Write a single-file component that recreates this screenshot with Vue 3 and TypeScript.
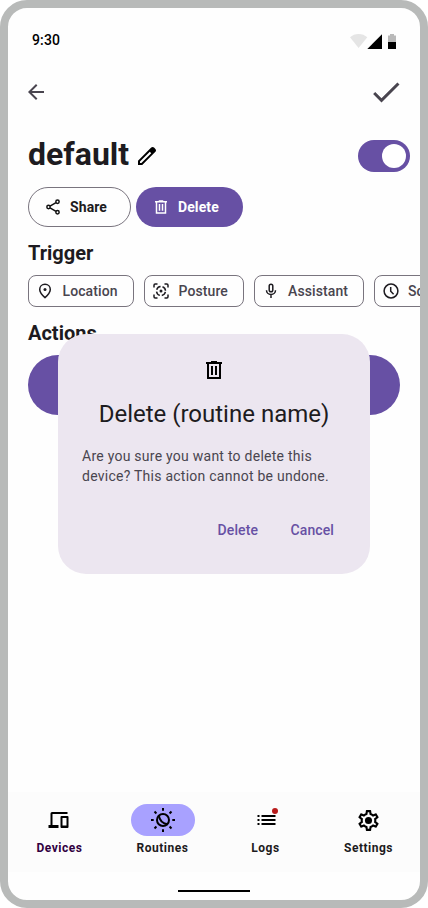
<script setup lang="ts">
import { ref } from 'vue'

interface Chip {
  id: string
  label: string
}
interface NavItem {
  id: string
  label: string
}

const enabled = ref(true)
const active = ref('routines')

const chips: Chip[] = [
  { id: 'location', label: 'Location' },
  { id: 'posture', label: 'Posture' },
  { id: 'assistant', label: 'Assistant' },
  { id: 'schedule', label: 'Schedule' },
]
const navItems: NavItem[] = [
  { id: 'devices', label: 'Devices' },
  { id: 'routines', label: 'Routines' },
  { id: 'logs', label: 'Logs' },
  { id: 'settings', label: 'Settings' },
]
const rayAngles = [0, 45, 90, 135, 180, 225, 270, 315]
const trashPath =
  'M15 4V3H9v1H4v2h1v14.500q0 .500.500.500h13q.500 0 .500-.500V6h1V4zm2 15H7V6h10zM9 8h2v9H9zm4 0h2v9h-2z'
</script>

<template>
  <div class="phone">
    <header class="status">
      <span class="time">9:30</span>
      <svg class="status-icons" width="48" height="16" viewBox="0 0 48 16">
        <path d="M0 3.300C2.300 1.200 5.200 0 8.600 0s6.400 1.200 8.700 3.300L8.600 14z" fill="#e5e5e5" />
        <path d="M17.300 15H32V.300z" fill="#000" />
        <path d="M38 8V1.500h2V0h4v1.500h2V8z" fill="#b9b9b9" />
        <path d="M38 8h8v7h-8z" fill="#000" />
      </svg>
    </header>

    <div class="toolbar">
      <button class="icon-btn" aria-label="Back">
        <svg width="24" height="24" viewBox="0 0 24 24">
          <path d="M20 11H7.830l5.590-5.590L12 4l-8 8 8 8 1.410-1.410L7.830 13H20z" fill="#49454f" />
        </svg>
      </button>
      <button class="icon-btn" aria-label="Save">
        <svg width="36" height="36" viewBox="0 0 24 24">
          <path d="M9 16.170 4.830 12l-1.420 1.410L9 19 21 7l-1.410-1.410z" fill="#49454f" />
        </svg>
      </button>
    </div>

    <main class="content">
      <div class="title-row">
        <h1>default</h1>
        <svg class="pencil" width="24" height="24" viewBox="0 0 24 24">
          <path fill-rule="evenodd" d="M3 21v-4.250L16.200 3.600q.6-.6 1.400-.6t1.425.6L20.400 5q.6.6.6 1.400t-.6 1.400L7.250 21zM5 19h1.400L16.250 9.200 14.800 7.750 5 17.600z" />
        </svg>
        <button class="switch" :class="{ on: enabled }" aria-label="Enabled" @click="enabled = !enabled">
          <span class="knob"></span>
        </button>
      </div>

      <div class="buttons">
        <button class="btn outlined">
          <svg width="18" height="18" viewBox="0 0 24 24" fill="none" stroke="#111" stroke-width="2">
            <circle cx="18" cy="5" r="2.200" />
            <circle cx="6" cy="12" r="2.200" />
            <circle cx="18" cy="19" r="2.200" />
            <path d="M8 10.900 16 6.200M8 13.100l8 4.700" />
          </svg>
          Share
        </button>
        <button class="btn filled">
          <svg width="18" height="18" viewBox="0 0 24 24"><path :d="trashPath" fill="#fff" /></svg>
          Delete
        </button>
      </div>

      <h2>Trigger</h2>
      <div class="chips">
        <button v-for="chip in chips" :key="chip.id" class="chip" :class="chip.id">
          <svg v-if="chip.id === 'location'" width="18" height="18" viewBox="0 0 18 18">
            <path d="M9 2.200c-3 0-5.300 2.200-5.300 5.200 0 2.500 1.800 5 5.300 8.200 3.500-3.200 5.300-5.700 5.300-8.200 0-3-2.300-5.200-5.300-5.200z" fill="none" stroke="#1d1b20" stroke-width="1.500" />
            <circle cx="9" cy="7.500" r="1.500" fill="#1d1b20" />
          </svg>
          <svg v-else-if="chip.id === 'posture'" width="18" height="18" viewBox="0 0 18 18" fill="none" stroke="#1d1b20" stroke-width="1.500">
            <path d="M2 5.500V3.200Q2 2 3.200 2H5.500M12.500 2h2.300Q16 2 16 3.200v2.300M16 12.500v2.300q0 1.200-1.200 1.200h-2.300M5.500 16H3.200Q2 16 2 14.800v-2.300" />
            <circle cx="9" cy="9" r="4.500" stroke-dasharray="5.070 2" stroke-dashoffset="-1" />
            <circle cx="9" cy="9" r="1.500" fill="#1d1b20" stroke="none" />
          </svg>
          <svg v-else-if="chip.id === 'assistant'" width="18" height="18" viewBox="0 0 18 18" fill="none" stroke="#1d1b20" stroke-width="1.500">
            <rect x="7.200" y="2.200" width="3.600" height="7.600" rx="1.800" />
            <path d="M4.500 8.200a4.500 4.300 0 0 0 9 0M9 12.500V16" />
          </svg>
          <svg v-else width="18" height="18" viewBox="0 0 18 18" fill="none" stroke="#1d1b20" stroke-width="1.500">
            <circle cx="9" cy="9" r="6.900" />
            <path d="M8.700 5v4.200l2.900 3" />
          </svg>
          <span>{{ chip.label }}</span>
        </button>
      </div>

      <h2>Actions</h2>
      <div class="action-pill"></div>
    </main>

    <nav class="nav">
      <button v-for="item in navItems" :key="item.id" class="nav-item" :class="[item.id, { active: active === item.id }]" @click="active = item.id">
        <span class="indicator">
          <svg v-if="item.id === 'devices'" width="24" height="24" viewBox="-0.500 0 24 24">
            <path d="M2 17V5.500Q2 4 3.500 4H19v2H4v11h6v3H0v-3z" />
            <path fill-rule="evenodd" d="M12 9q0-1 1-1h6q1 0 1 1v10q0 1-1 1h-6q-1 0-1-1zm2 1v7.500h4V10z" />
          </svg>
          <svg v-else-if="item.id === 'routines'" width="26" height="26" viewBox="-13 -13 26 26" fill="none" stroke="#000" stroke-width="2">
            <path v-for="a in rayAngles" :key="a" d="M0-12v2.700" :transform="`rotate(${a})`" />
            <circle r="6" />
            <path d="M-4.200-4.800C-3.600.200-.200 3.800 5 4.300" />
          </svg>
          <svg v-else-if="item.id === 'logs'" width="24" height="24" viewBox="-0.500 0 24 24">
            <path d="M3 7h2v2H3zm0 4h2v2H3zm0 4h2v2H3zM7 7h14v2H7zm0 4h14v2H7zm0 4h14v2H7z" />
          </svg>
          <svg v-else width="25" height="25" viewBox="0 0 24 24">
            <path d="M19.430 12.980c.040-.320.070-.640.070-.980s-.030-.660-.070-.980l2.110-1.650c.190-.150.240-.420.120-.640l-2-3.460c-.090-.160-.260-.250-.440-.250-.060 0-.120.010-.170.030l-2.490 1c-.520-.400-1.080-.730-1.690-.980l-.380-2.650C14.460 2.180 14.250 2 14 2h-4c-.250 0-.460.180-.490.420l-.380 2.650c-.610.250-1.170.590-1.690.980l-2.490-1c-.060-.020-.120-.030-.180-.030-.170 0-.340.090-.430.250l-2 3.460c-.130.220-.070.490.120.640l2.110 1.650c-.040.320-.070.650-.070.980s.030.660.070.980l-2.110 1.650c-.190.150-.240.420-.120.640l2 3.460c.090.160.260.250.440.250.060 0 .120-.010.170-.030l2.490-1c.520.400 1.080.730 1.690.980l.380 2.650c.030.240.240.420.490.420h4c.250 0 .460-.180.490-.420l.380-2.650c.610-.250 1.170-.590 1.690-.980l2.490 1c.060.020.120.030.180.030.170 0 .340-.090.430-.250l2-3.460c.120-.220.070-.490-.120-.640zm-1.980-1.710c.040.310.050.520.050.730s-.020.430-.050.730l-.140 1.130.890.700 1.080.840-.700 1.210-1.270-.510-1.040-.420-.900.680c-.430.320-.840.560-1.250.730l-1.060.430-.160 1.130-.200 1.350h-1.400l-.350-2.480-1.060-.430c-.430-.180-.830-.410-1.230-.710l-.910-.700-1.060.430-1.270.510-.700-1.210 1.970-1.540-.140-1.130c-.030-.310-.050-.540-.050-.740s.020-.430.050-.730l.140-1.130-1.970-1.540.700-1.210 2.310.930.900-.680c.430-.320.840-.560 1.250-.730l1.060-.430.360-2.480h1.390l.350 2.480 1.060.430c.430.180.830.410 1.230.710l.910.700 2.330-.940.700 1.210-1.960 1.550z" />
            <circle cx="12" cy="12" r="3.400" />
          </svg>
          <span v-if="item.id === 'logs'" class="badge"></span>
        </span>
        <span class="nav-label">{{ item.label }}</span>
      </button>
    </nav>
    <div class="home-area"><span class="home-bar"></span></div>

    <section class="dialog" role="dialog">
      <svg width="24" height="24" viewBox="0 0 24 24"><path :d="trashPath" /></svg>
      <h3>Delete (routine name)</h3>
      <p>Are you sure you want to delete this device? This action cannot be undone.</p>
      <div class="dialog-actions">
        <button>Delete</button>
        <button>Cancel</button>
      </div>
    </section>
  </div>
</template>

<style>
body {
  background: #fff;
}
</style>

<style scoped>
* {
  box-sizing: border-box;
}
.phone {
  position: relative;
  display: flex;
  flex-direction: column;
  width: 428px;
  height: 908px;
  border: 8px solid #b8bab9;
  border-radius: 27px;
  background: #fefefe;
  overflow: hidden;
  font-family: Roboto, 'Liberation Sans', sans-serif;
  color: #1d1b20;
}
button {
  font-family: inherit;
  border: 0;
  padding: 0;
  margin: 0;
  background: none;
}
svg {
  display: block;
  flex: none;
}
.status {
  display: flex;
  justify-content: space-between;
  align-items: flex-start;
  height: 58px;
  padding: 22px 22px 0 24px;
}
.time {
  font-size: 14px;
  font-weight: 500;
  line-height: 20px;
  letter-spacing: 0.14px;
  color: #000;
}
.status-icons {
  margin-top: 4px;
}
.toolbar {
  display: flex;
  justify-content: space-between;
  align-items: center;
  height: 52px;
  padding: 0 16px;
}
.content {
  display: flex;
  flex-direction: column;
  padding: 16px 0 0 20px;
  height: 674px;
}
.title-row {
  display: flex;
  align-items: center;
  height: 40px;
}
h1,
h2,
h3,
p {
  margin: 0;
}
h1 {
  font-size: 32px;
  line-height: 40px;
  font-weight: 700;
  width: 107px;
}
.pencil {
  margin-top: 4px;
}
.switch {
  display: flex;
  align-items: center;
  width: 52px;
  height: 32px;
  margin: 4px 10px 0 auto;
  padding: 4px;
  border-radius: 16px;
  background: #938f99;
}
.switch.on {
  justify-content: flex-end;
  background: #6750a4;
}
.knob {
  width: 24px;
  height: 24px;
  border-radius: 50%;
  background: #fff;
}
.buttons {
  display: flex;
  gap: 5px;
  margin-top: 13px;
}
.btn {
  display: flex;
  align-items: center;
  gap: 8px;
  height: 40px;
  padding-left: 16px;
  border-radius: 20px;
  font-size: 14px;
  font-weight: 700;
  letter-spacing: 0.1px;
}
.outlined {
  width: 103px;
  border: 1px solid #79747e;
  padding-left: 15px;
  color: #1d1b20;
}
.filled {
  width: 107px;
  background: #6750a4;
  color: #fff;
}
h2 {
  margin-top: 14px;
  font-size: 20px;
  line-height: 24px;
  font-weight: 700;
}
.chips {
  display: flex;
  gap: 10px;
  margin-top: 10px;
  overflow: hidden;
}
.chip {
  display: flex;
  flex: none;
  align-items: center;
  gap: 8px;
  height: 32px;
  padding-left: 7px;
  border: 1px solid #79747e;
  border-radius: 8px;
  font-size: 14px;
  font-weight: 500;
  letter-spacing: 0.1px;
  color: #49454f;
}
.location {
  width: 106px;
  gap: 8.5px;
}
.posture {
  width: 100px;
  gap: 8.5px;
}
.assistant {
  width: 110px;
}
.schedule {
  width: 108px;
}
.action-pill {
  width: 372px;
  height: 60px;
  margin-top: 10px;
  border-radius: 30px;
  background: #6750a4;
}
.nav {
  display: grid;
  grid-template-columns: repeat(4, 1fr);
  flex: none;
  height: 80px;
  background: #fcfcfc;
}
.nav-item {
  display: flex;
  flex-direction: column;
  align-items: center;
  gap: 4px;
  padding-top: 12px;
  color: #1d1b20;
}
.indicator {
  position: relative;
  display: flex;
  align-items: center;
  justify-content: center;
  width: 64px;
  height: 32px;
  border-radius: 16px;
}
.active .indicator {
  background: #a8a1ff;
}
.badge {
  position: absolute;
  top: 4px;
  right: 19.5px;
  width: 6px;
  height: 6px;
  border-radius: 50%;
  background: #b91c1c;
}
.nav-label {
  font-size: 12px;
  line-height: 16px;
  font-weight: 700;
  letter-spacing: 0.5px;
}
.devices .nav-label {
  color: #31003f;
}
.home-area {
  display: flex;
  justify-content: center;
  padding-top: 18px;
}
.home-bar {
  width: 72px;
  height: 2px;
  background: #000;
}
.dialog {
  position: absolute;
  left: 50px;
  top: 326px;
  width: 312px;
  height: 240px;
  padding: 24px;
  border-radius: 28px;
  background: #ece6f0;
  display: flex;
  flex-direction: column;
  align-items: center;
}
.dialog h3 {
  margin-top: 16px;
  font-size: 24px;
  line-height: 32px;
  font-weight: 400;
}
.dialog p {
  margin-top: 16px;
  width: 264px;
  font-size: 14px;
  line-height: 20px;
  letter-spacing: 0.25px;
  color: #49454f;
}
.dialog-actions {
  display: flex;
  align-self: flex-end;
  gap: 32.5px;
  margin: 34px 12px 0 0;
}
.dialog-actions button {
  font-size: 14px;
  line-height: 20px;
  font-weight: 500;
  letter-spacing: 0.1px;
  color: #6750a4;
}
</style>
